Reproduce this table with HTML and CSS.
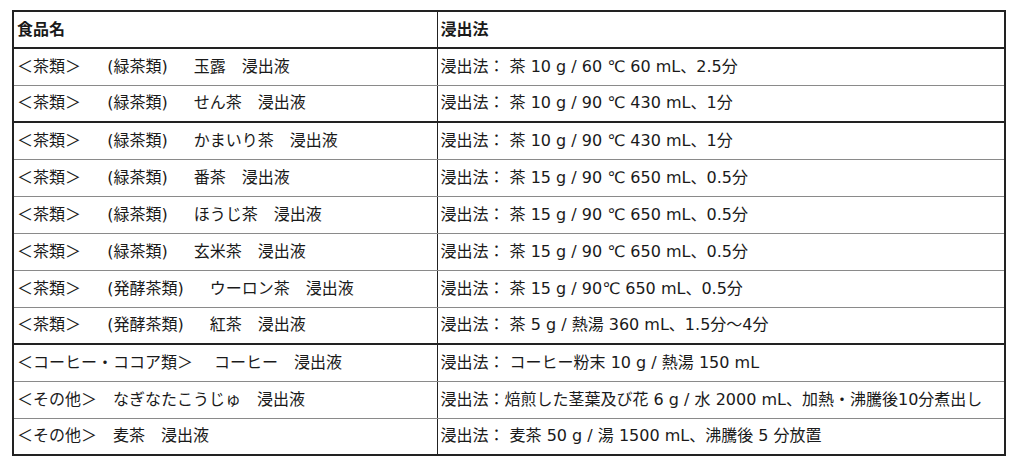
FILE: index.html
```html
<!DOCTYPE html>
<html lang="ja">
<head>
<meta charset="utf-8">
<link rel="stylesheet" href="styles.css">
</head>
<body>
<table class="tbl">
  <colgroup><col class="c1"><col class="c2"></colgroup>
  <thead>
    <tr class="thick"><th>食品名</th><th>浸出法</th></tr>
  </thead>
  <tbody>
    <tr><td>＜茶類＞　  (緑茶類)　  玉露　浸出液</td><td>浸出法： 茶 10 g / 60 ℃ 60 mL、2.5分</td></tr>
    <tr class="thick"><td>＜茶類＞　  (緑茶類)　  せん茶　浸出液</td><td>浸出法： 茶 10 g / 90 ℃ 430 mL、1分</td></tr>
    <tr><td>＜茶類＞　  (緑茶類)　  かまいり茶　浸出液</td><td>浸出法： 茶 10 g / 90 ℃ 430 mL、1分</td></tr>
    <tr><td>＜茶類＞　  (緑茶類)　  番茶　浸出液</td><td>浸出法： 茶 15 g / 90 ℃ 650 mL、0.5分</td></tr>
    <tr><td>＜茶類＞　  (緑茶類)　  ほうじ茶　浸出液</td><td>浸出法： 茶 15 g / 90 ℃ 650 mL、0.5分</td></tr>
    <tr><td>＜茶類＞　  (緑茶類)　  玄米茶　浸出液</td><td>浸出法： 茶 15 g / 90 ℃ 650 mL、0.5分</td></tr>
    <tr><td>＜茶類＞　  (発酵茶類)　  ウーロン茶　浸出液</td><td>浸出法： 茶 15 g / 90℃ 650 mL、0.5分</td></tr>
    <tr class="thick"><td>＜茶類＞　  (発酵茶類)　  紅茶　浸出液</td><td>浸出法： 茶 5 g / 熱湯 360 mL、1.5分～4分</td></tr>
    <tr><td>＜コーヒー・ココア類＞　 コーヒー　浸出液</td><td>浸出法： コーヒー粉末 10 g / 熱湯 150 mL</td></tr>
    <tr><td>＜その他＞　なぎなたこうじゅ　浸出液</td><td>浸出法：焙煎した茎葉及び花 6 g / 水 2000 mL、加熱・沸騰後10分煮出し</td></tr>
    <tr><td>＜その他＞　麦茶　浸出液</td><td>浸出法： 麦茶 50 g / 湯 1500 mL、沸騰後 5 分放置</td></tr>
  </tbody>
</table>
</body>
</html>
```

FILE: styles.css
```css
html, body {
  margin: 0;
  padding: 0;
  background: #ffffff;
}
body {
  padding: 10px 0 0 12px;
  font-family: "DejaVu Sans", "Noto Sans CJK JP", sans-serif;
  color: #1a1a1a;
}
.tbl {
  border-collapse: collapse;
  width: 992px;
  table-layout: fixed;
  border: 2px solid #222;
}
.c1 { width: 424px; }
.c2 { width: 568px; }
.tbl th, .tbl td {
  height: 37px;
  padding: 0 3px;
  border: 1px solid #8a8a8a;
  border-left-color: #222;
  border-right-color: #222;
  font-size: 16px;
  line-height: 20px;
  text-align: left;
  vertical-align: middle;
  white-space: pre;
  overflow: hidden;
  box-sizing: border-box;
}
.tbl th {
  font-weight: bold;
}
.tbl tr.thick th, .tbl tr.thick td {
  border-bottom: 2px solid #222;
}
```
